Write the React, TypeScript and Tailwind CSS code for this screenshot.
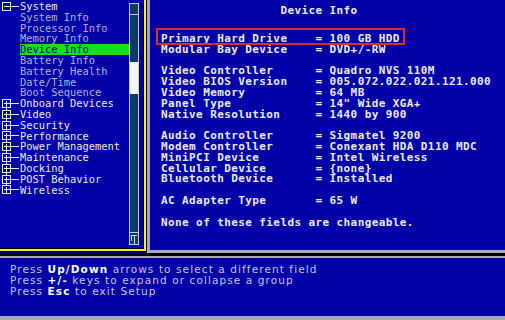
import React from 'react';

const mono = { fontFamily: '"DejaVu Sans Mono", "Liberation Mono", monospace' };
const sans = { fontFamily: '"DejaVu Sans", Verdana, sans-serif' };

type TreeRow = { label: string; kind: 'open' | 'closed' | 'child'; selected?: boolean; line?: 'down' | 'both' | 'up' };

const tree: TreeRow[] = [
  { label: 'System', kind: 'open' },
  { label: 'System Info', kind: 'child' },
  { label: 'Processor Info', kind: 'child' },
  { label: 'Memory Info', kind: 'child' },
  { label: 'Device Info', kind: 'child', selected: true },
  { label: 'Battery Info', kind: 'child' },
  { label: 'Battery Health', kind: 'child' },
  { label: 'Date/Time', kind: 'child' },
  { label: 'Boot Sequence', kind: 'child' },
  { label: 'Onboard Devices', kind: 'closed', line: 'down' },
  { label: 'Video', kind: 'closed', line: 'both' },
  { label: 'Security', kind: 'closed', line: 'both' },
  { label: 'Performance', kind: 'closed', line: 'both' },
  { label: 'Power Management', kind: 'closed', line: 'both' },
  { label: 'Maintenance', kind: 'closed', line: 'both' },
  { label: 'Docking', kind: 'closed', line: 'both' },
  { label: 'POST Behavior', kind: 'closed', line: 'both' },
  { label: 'Wireless', kind: 'closed', line: 'up' },
];

// label padded to 22 columns, then "= value"
const fields: ([string, string] | null)[] = [
  ['Primary Hard Drive', '100 GB HDD'],
  ['Modular Bay Device', 'DVD+/-RW'],
  null,
  ['Video Controller', 'Quadro NVS 110M'],
  ['Video BIOS Version', '005.072.022.021.121.000'],
  ['Video Memory', '64 MB'],
  ['Panel Type', '14" Wide XGA+'],
  ['Native Resolution', '1440 by 900'],
  null,
  ['Audio Controller', 'Sigmatel 9200'],
  ['Modem Controller', 'Conexant HDA D110 MDC'],
  ['MiniPCI Device', 'Intel Wireless'],
  ['Cellular Device', '{none}'],
  ['Bluetooth Device', 'Installed'],
  null,
  ['AC Adapter Type', '65 W'],
];

function TreeIcon({ row }: { row: TreeRow }) {
  if (row.kind === 'child') return <span className="w-[20px] shrink-0" />;
  return (
    <svg width="20" height="11" viewBox="0 0 20 11" className="shrink-0" shapeRendering="crispEdges">
      {(row.line === 'both' || row.line === 'up') && <line x1="6.5" y1="0" x2="6.5" y2="2" stroke="#e8e8e8" />}
      {(row.line === 'both' || row.line === 'down') && <line x1="6.5" y1="9" x2="6.5" y2="11" stroke="#e8e8e8" />}
      <rect x="2.5" y="1.5" width="8" height="8" fill="none" stroke="#e8e8e8" />
      <line x1="4" y1="5.5" x2="10" y2="5.5" stroke="#e8e8e8" />
      {row.kind === 'closed' && <line x1="6.5" y1="3" x2="6.5" y2="9" stroke="#e8e8e8" />}
      <line x1="11" y1="5.5" x2="19" y2="5.5" stroke="#e8e8e8" />
    </svg>
  );
}

export default function App() {
  return (
    <div className="w-[505px] h-[320px] bg-[#0000a8] flex flex-col overflow-hidden">
      {/* Top area */}
      <div className="h-[253px] flex">
        {/* Left tree panel with yellow frame */}
        <div className="w-[147px] h-[252px] bg-black pr-px pb-px">
          <div className="h-full border-r-2 border-b-2 border-[#f4f400]">
            <div className="h-full flex border-r border-b border-black bg-[#0000a8]">
              <div className="flex-1 pt-[1px] text-[10.4px] leading-[10.8px]" style={mono}>
                {tree.map((row) => (
                  <div key={row.label} className="flex items-center h-[10.8px]">
                    <TreeIcon row={row} />
                    <span
                      className={
                        row.selected
                          ? 'flex-1 bg-[#16e016] text-[#0000a0] h-full'
                          : row.kind === 'child'
                            ? 'text-[#b4b4d4]'
                            : 'text-[#ececec]'
                      }
                    >
                      {row.label}
                    </span>
                  </div>
                ))}
              </div>
              {/* Scrollbar */}
              <div className="w-[10px] mt-[3px] mb-[3px] mr-[4px] border border-[#c8c8d0] bg-[#0c3a66] flex flex-col">
                <div className="h-[11px] border-b border-[#c8c8d0]" />
                <div className="h-[47px]" />
                <div className="h-[32px] bg-[#f4f4f4]" />
                <div className="flex-1" />
                <div className="h-[12px] border-t border-[#c8c8d0] flex justify-center">
                  <svg width="8" height="11" viewBox="0 0 8 11" shapeRendering="crispEdges">
                    <line x1="1" y1="2.5" x2="7" y2="2.5" stroke="#d8d8d8" />
                    <line x1="4.5" y1="2" x2="4.5" y2="11" stroke="#d8d8d8" />
                    <line x1="1.5" y1="2" x2="1.5" y2="8" stroke="#d8d8d8" />
                  </svg>
                </div>
              </div>
            </div>
          </div>
        </div>
        {/* Gray divider */}
        <div className="w-[3px] bg-[#a8a8b0]" />
        {/* Right info panel */}
        <div
          className="flex-1 relative border-b-[3px] border-[#a8a8b0] pl-[11px] pt-[4px] font-bold text-[#ececf4] text-[11px] tracking-[0.4px] leading-[10.8px] whitespace-pre"
          style={mono}
        >
          <div className="text-center pr-[28px] h-[13px] leading-[13px]">Device Info</div>
          <div className="h-[17px]" />
          {fields.map((f, i) => (
            <div key={i} className="h-[10.8px]">
              {f ? `${f[0].padEnd(22, ' ')}= ${f[1]}` : ' '}
            </div>
          ))}
          <div className="h-[10.8px]" />
          <div className="h-[10.8px]">None of these fields are changeable.</div>
          {/* Red annotation box */}
          <div className="absolute left-[6px] top-[28px] w-[249px] h-[17px] border-2 border-[#e02a2a]" />
        </div>
      </div>
      <div className="h-[3px] bg-black" />
      <div className="h-[2px] bg-[#a8a8b0]" />
      {/* Help panel */}
      <div
        className="h-[58px] pl-[10px] pt-[6px] text-[10.5px] leading-[11px] tracking-[1.1px] text-[#c8c8dc]"
        style={sans}
      >
        <div>
          Press <b className="text-white">Up/Down</b> arrows to select a different field
        </div>
        <div>
          Press <b className="text-white">+/-</b> keys to expand or collapse a group
        </div>
        <div>
          Press <b className="text-white">Esc</b> to exit Setup
        </div>
      </div>
      <div className="h-[4px] bg-[#a8a8b0]" />
    </div>
  );
}
